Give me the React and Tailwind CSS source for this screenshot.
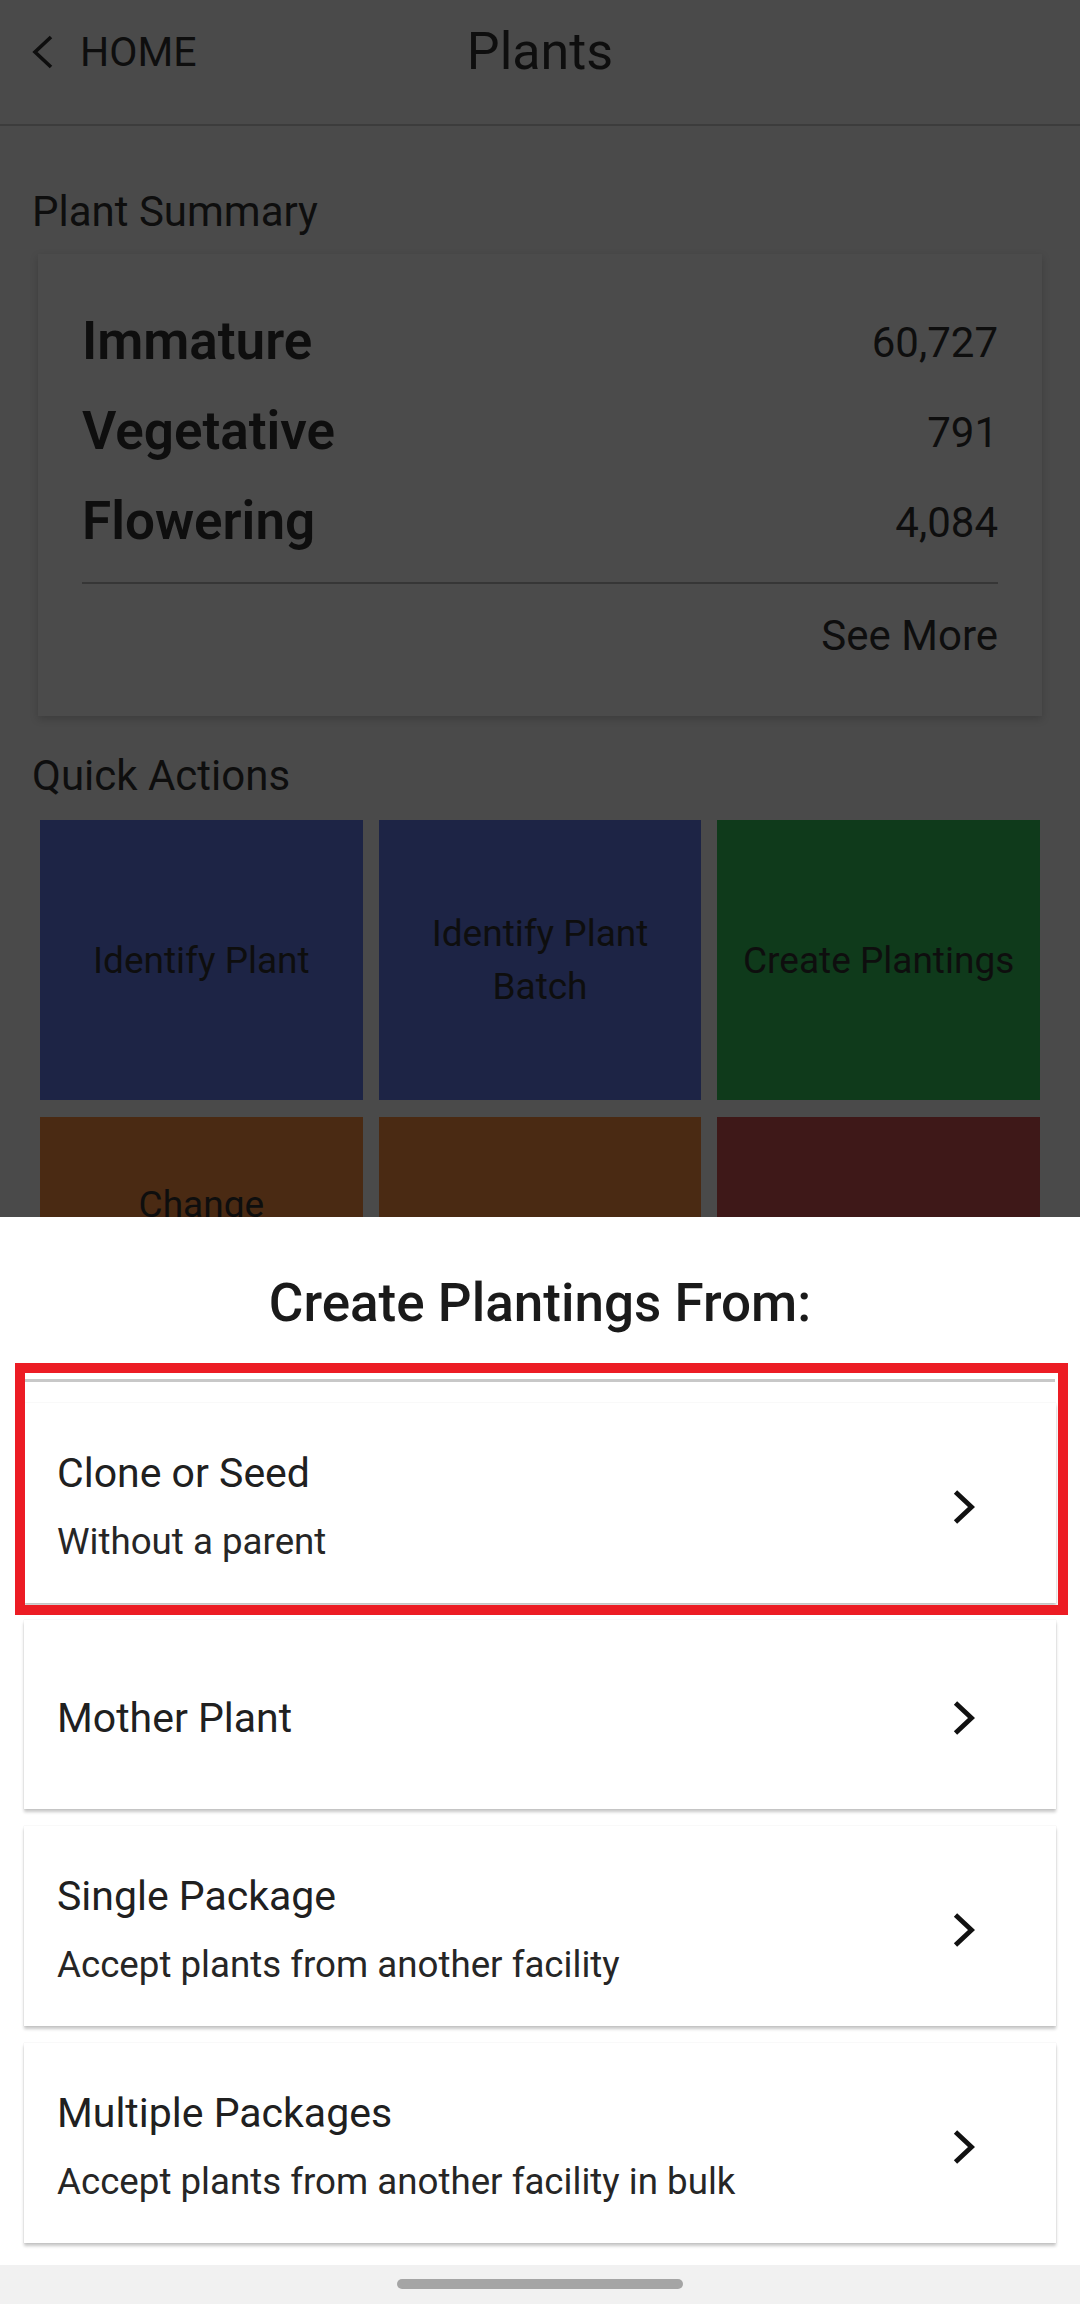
import React from 'react';

const SUMMARY = [
  { label: 'Immature', value: '60,727' },
  { label: 'Vegetative', value: '791' },
  { label: 'Flowering', value: '4,084' },
];

const TILES = [
  { text: 'Identify Plant', bg: 'bg-[#1d2445]' },
  { text: 'Identify Plant\nBatch', bg: 'bg-[#1d2445]' },
  { text: 'Create Plantings', bg: 'bg-[#0f3a1b]' },
  { text: 'Change\nGrowth\nPhase', bg: 'bg-[#4a2a13]' },
  { text: '', bg: 'bg-[#4a2a13]' },
  { text: '', bg: 'bg-[#3e1818]' },
];

const OPTIONS = [
  { title: 'Clone or Seed', sub: 'Without a parent', h: 'h-[200px]' },
  { title: 'Mother Plant', h: 'h-[189px]' },
  { title: 'Single Package', sub: 'Accept plants from another facility', h: 'h-[200px]' },
  { title: 'Multiple Packages', sub: 'Accept plants from another facility in bulk', h: 'h-[200px]' },
];

const Chevron = ({ flip, width = 4.2, className }) => (
  <svg viewBox="0 0 24 36" className={className} fill="none">
    <polyline
      points={flip ? '20,3 4,18 20,33' : '4,3 20,18 4,33'}
      stroke="currentColor"
      strokeWidth={width}
      strokeLinejoin="miter"
    />
  </svg>
);

export default function App() {
  return (
    <div className="w-[1080px] h-[2304px] overflow-hidden font-['Roboto',sans-serif]">
      {/* dimmed page behind the sheet */}
      <div className="h-[1217px] overflow-hidden bg-[#4a4a4a] text-[#0e0e0e]">
        <header className="h-[126px] border-b-2 border-[#3c3c3c] grid grid-cols-3 items-start">
          <div className="h-[104px] flex items-center pl-[31px] gap-[25px]">
            <Chevron flip width={3.6} className="w-[24px] h-[38px] text-[#0e0e0e]" />
            <span className="text-[41px] leading-none">HOME</span>
          </div>
          <div className="h-[104px] flex items-center justify-center text-[52px]">Plants</div>
          <div />
        </header>

        <div className="px-[32px]">
          <p className="mt-[62px] text-[42px] leading-[48px]">Plant Summary</p>

          <div className="mt-[18px] mx-[6px] px-[44px] pt-[43px] pb-[56px] bg-[#4b4b4b] shadow-[0_3px_8px_rgba(0,0,0,0.18)]">
            {SUMMARY.map(r => (
              <div key={r.label} className="h-[90px] flex items-center justify-between">
                <span className="text-[53px] font-semibold">{r.label}</span>
                <span className="text-[42px]">{r.value}</span>
              </div>
            ))}
            <div className="mt-[15px] h-[2px] bg-[#363636]" />
            <p className="mt-[28px] text-right text-[42px] leading-[48px]">See More</p>
          </div>

          <p className="mt-[36px] text-[42px] leading-[48px]">Quick Actions</p>

          <div className="mt-[20px] mx-[8px] grid grid-cols-3 gap-x-[16px] gap-y-[17px]">
            {TILES.map((t, i) => (
              <div key={i} className={`h-[280px] flex items-center justify-center px-4 text-center text-[37px] leading-[53px] whitespace-pre-line ${t.bg}`}>
                {t.text}
              </div>
            ))}
          </div>
        </div>
      </div>

      {/* bottom sheet */}
      <div className="relative h-[1048px] bg-white">
        <h2 className="pt-[56px] text-center text-[53px] font-medium leading-[60px] text-[#1a1a1a]">
          Create Plantings From:
        </h2>
        <div className="mt-[46px] mx-[25px] h-[3px] bg-[#c8c8c8]" />

        <div className="mt-[21px] px-[24px] flex flex-col gap-[17px]">
          {OPTIONS.map(o => (
            <div key={o.title}
              className={`${o.h} pt-[7px] pl-[33px] pr-[80px] flex items-center justify-between bg-white shadow-[0_3px_3px_rgba(0,0,0,0.22),0_0_1px_rgba(0,0,0,0.15)]`}>
              <div className="flex flex-col">
                <span className="text-[41px] leading-[48px] text-[#202020]">{o.title}</span>
                {o.sub && <span className="mt-[23px] text-[36.7px] leading-[44px] text-[#262626]">{o.sub}</span>}
              </div>
              <Chevron width={4.8} className="w-[25px] h-[36px] text-[#111]" />
            </div>
          ))}
        </div>

        {/* highlight annotation */}
        <div className="absolute left-[15px] top-[146px] w-[1053px] h-[252px] border-[10px] border-[#ec1c24]" />
      </div>

      {/* system nav bar */}
      <div className="h-[39px] bg-[#f1f1f1] flex justify-center pt-[14px]">
        <div className="w-[286px] h-[10px] rounded-full bg-[#a5a5a5]" />
      </div>
    </div>
  );
}
